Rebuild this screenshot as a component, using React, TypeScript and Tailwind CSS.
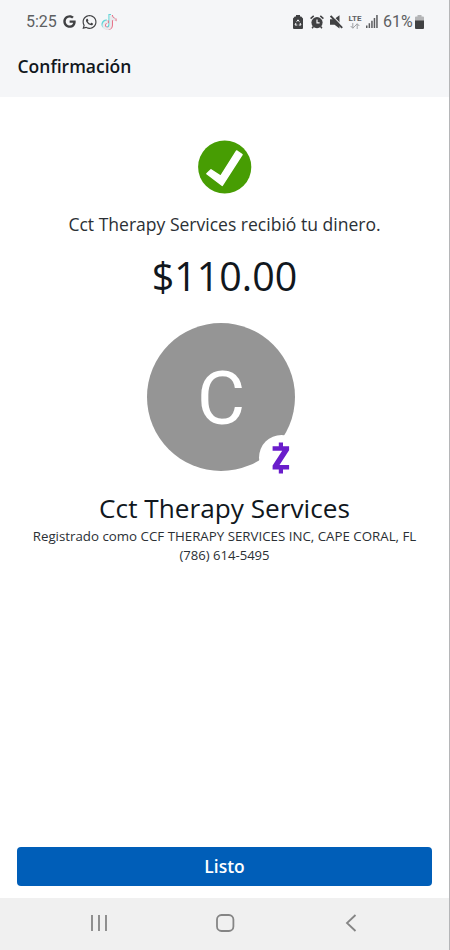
import type { ReactNode } from 'react'
import { FaGoogle, FaTiktok, FaWhatsapp } from 'react-icons/fa'

const PAYMENT = {
  recipient: 'Cct Therapy Services',
  amount: '$110.00',
  registeredAs: 'CCF THERAPY SERVICES INC, CAPE CORAL, FL',
  phone: '(786) 614-5495',
}

function TikTokIcon() {
  return (
    <div className="relative h-[15px] w-[15px]">
      <FaTiktok className="absolute -left-px top-0 h-[15px] w-[14px] text-[#62d5d8]" />
      <FaTiktok className="absolute left-px top-px h-[15px] w-[14px] text-[#e86f86]" />
      <FaTiktok className="absolute left-0 top-[0.5px] h-[15px] w-[14px] text-[#e9ebee]" />
    </div>
  )
}

function BatterySaverIcon() {
  return (
    <svg viewBox="0 0 10 14" className="h-[14px] w-[10px]">
      <path d="M3 0h4v1.6h1.2L10 3.4V13a1 1 0 0 1-1 1H1a1 1 0 0 1-1-1V3.4l1.8-1.8H3z" fill="#404143" />
      <path d="M3.7 6.7 5 4.8l1.3 1.9M7 7.900l1 2.100H5.800M4.300 10H2l1-2.100" fill="none" stroke="#f5f6f8" strokeWidth="1" />
    </svg>
  )
}

function AlarmIcon() {
  return (
    <svg viewBox="0 0 14 14" className="h-[14px] w-[14px]" fill="none">
      <circle cx="7" cy="7.6" r="5.6" fill="#404143" />
      <path d="M.6 3.6 3.7.9M13.4 3.6 10.3.9M3.4 11.5l-1.3 1.7M10.6 11.5l1.3 1.7" stroke="#404143" strokeWidth="1.5" />
      <path d="M7 4.5v3.4h2.6" stroke="#f5f6f8" strokeWidth="1.2" />
    </svg>
  )
}

function MuteIcon() {
  return (
    <svg viewBox="0 0 13 14" className="h-[14px] w-[13px]">
      <path d="M0 4.3h4L9.5.3v13.2L4.6 9.7H0z" fill="#404143" />
      <path d="M1.8.2 13 11.6" stroke="#f5f6f8" strokeWidth="1.2" />
      <path d="M.6 1 12.2 12.8" stroke="#404143" strokeWidth="1.9" />
    </svg>
  )
}

function SignalIcon() {
  return (
    <svg viewBox="0 0 12 13" className="h-[13px] w-3" fill="#5b5c5e">
      <path d="M0 10.5h1.5V13H0zM2.6 8.3h1.5V13H2.6zM5.2 5.8h1.5V13H5.2zM7.7 3h1.5v10H7.7zM10.2 0h1.5v13h-1.5z" />
    </svg>
  )
}

function BatteryIcon() {
  return (
    <svg viewBox="0 0 9 14" className="h-[14px] w-[9px]">
      <path d="M2.5 0h4v1.5H8a1 1 0 0 1 1 1V6H0V2.5a1 1 0 0 1 1-1h1.5z" fill="#b4b5b7" />
      <path d="M0 5.5h9V13a1 1 0 0 1-1 1H1a1 1 0 0 1-1-1z" fill="#404143" />
    </svg>
  )
}

function StatusBar() {
  return (
    <div className="flex h-[43px] items-center justify-between pl-[26px] pr-[25px] font-['Roboto',sans-serif] text-[#5d5f62]">
      <div className="flex items-center">
        <span className="w-[37px] pt-px text-[16px]">5:25</span>
        <FaGoogle className="mr-[6px] h-[13px] w-[13px] text-[#404143]" />
        <FaWhatsapp className="mr-[5px] h-[16px] w-[15px] text-[#404143]" />
        <TikTokIcon />
      </div>
      <div className="flex items-center">
        <BatterySaverIcon />
        <div className="ml-[7px]"><AlarmIcon /></div>
        <div className="ml-[6px]"><MuteIcon /></div>
        <div className="ml-[5px] flex w-[14px] flex-col items-center">
          <span className="text-[8px] font-bold leading-[8px]">LTE</span>
          <svg viewBox="0 0 10 6" className="h-[6px] w-[10px]" fill="none" stroke="#9fa1a4" strokeWidth="1">
            <path d="M2.8 0v5M.7 3l2.1 2.3L4.9 3M7.2 6V1M5.1 3l2.1-2.3L9.3 3" />
          </svg>
        </div>
        <div className="ml-[4px]"><SignalIcon /></div>
        <span className="ml-[5px] w-[32px] pt-px text-[16px]">61%</span>
        <BatteryIcon />
      </div>
    </div>
  )
}

function ZelleBadge() {
  return (
    <div className="absolute left-[111.5px] top-[112px] flex h-[45px] w-[45px] items-center justify-center rounded-full bg-white">
      <svg viewBox="0 0 18 32" className="h-8 w-[18px]" fill="#6a1dcb">
        <path d="M6.8.5h4.2v3.8h6.100v4L7.500 23.100h9.600v4.400H11v4H6.800v-4H.6v-4L10.200 8.700H.6V4.300h6.200z" />
      </svg>
    </div>
  )
}

function NavButton({ label, children }: { label: string; children: ReactNode }) {
  return (
    <button aria-label={label} className="flex w-[126px] items-center justify-center">
      <svg viewBox="0 0 20 20" className="h-5 w-5" fill="none" stroke="#858585" strokeWidth="1.8">
        {children}
      </svg>
    </button>
  )
}

export default function App() {
  return (
    <div className="flex h-[950px] w-[450px] flex-col overflow-hidden border-r border-[#b5b6b8] bg-white font-['Open_Sans',sans-serif] text-[#11171d]">
      <header className="h-[97px] shrink-0 bg-[#f5f6f8]">
        <StatusBar />
        <h1 className="pl-[17.5px] pt-[11px] text-[17.5px] font-semibold leading-6">Confirmación</h1>
      </header>

      <main className="flex flex-1 flex-col items-center whitespace-nowrap pt-[43px]">
        <svg viewBox="0 0 54 54" className="h-[54px] w-[54px]">
          <circle cx="26.7" cy="27" r="26.6" fill="#479d03" />
          <path
            d="M8.8 33.8 13 29.8l9.7 6.3L38.600 10.900l5.500 3.600L24.300 45.400z"
            fill="#fff"
            stroke="#fff"
            strokeWidth="1.4"
            strokeLinejoin="round"
          />
        </svg>
        <p className="mt-[18px] text-[17.55px] leading-6 text-[#2b3035]">{PAYMENT.recipient} recibió tu dinero.</p>
        <p className="mt-[15px] text-[39.4px] leading-[50px]">{PAYMENT.amount}</p>

        <div className="relative mr-[7px] mt-[22px] flex h-[148px] w-[148px] items-center justify-center rounded-full bg-[#959595]">
          <span className="pt-[3px] font-['Roboto',sans-serif] text-[74px] leading-none text-white">C</span>
          <ZelleBadge />
        </div>

        <h2 className="mt-[19px] text-[26.2px] leading-9">{PAYMENT.recipient}</h2>
        <p className="mt-px text-[13.3px] leading-[19px] text-[#2b3035]">Registrado como {PAYMENT.registeredAs}</p>
        <p className="text-[13.1px] leading-[19px] text-[#2b3035]">{PAYMENT.phone}</p>
      </main>

      <div className="px-[17px] pb-3">
        <button className="h-[39px] w-full rounded bg-[#005eb8] text-[17.4px] font-semibold text-white">Listo</button>
      </div>

      <nav className="flex h-[52px] shrink-0 justify-center bg-[#f0f0f0] pb-[2px]">
        <NavButton label="Recientes">
          <path d="M3 2v16M10 2v16M17 2v16" />
        </NavButton>
        <NavButton label="Inicio">
          <rect x="2" y="2" width="16.4" height="16" rx="4.5" />
        </NavButton>
        <NavButton label="Atrás">
          <path d="M14.5 2 6 10l8.5 8" />
        </NavButton>
      </nav>
    </div>
  )
}
